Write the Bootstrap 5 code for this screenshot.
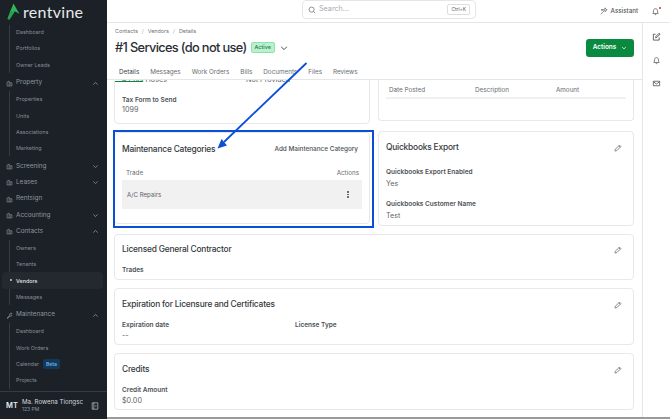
<!DOCTYPE html>
<html>
<head>
<meta charset="UTF-8">
<title>Vendor Details</title>
<link href="https://cdn.jsdelivr.net/npm/bootstrap@5.3.0/dist/css/bootstrap.min.css" rel="stylesheet">
<style>
    html, body { height: 100%; }
    body { font-family: Inter, "Liberation Sans", sans-serif; color: #343a40; background: #fff; position: relative; }
    .side { width: 107px; background: #1b2127; color: #8f969d; flex: none; }
    .brand { height: 25px; padding: 3px 0 0 7px; gap: 3px; }
    .brand-name { font-family: Lato, sans-serif; font-size: 16px; line-height: 18px; color: #e8eaec; letter-spacing: .3px; }
    .side-scroll { min-height: 0; }
    .grp { height: 16.3px; padding: 0 8px 0 6px; margin-top: 2px; font-size: 6.4px; gap: 3px; }
    .grp svg { flex: none; }
    .grp-tight { margin-top: 0; }
    .subs { margin-left: 9px; border-left: 1px solid #343b42; }
    .subs-first { margin-top: -1px; }
    .sub { height: 16.3px; padding-left: 6px; font-size: 5.4px; color: #868d94; gap: 4px; }
    .sub.on { background: #23292f; color: #e3e5e7; margin-left: -8px; margin-right: 4px; padding-left: 14px; border-radius: 4px; position: relative; font-weight: 500; }
    .sub.on::before { content: ""; position: absolute; left: 8px; top: 7px; width: 2px; height: 2px; border-radius: 50%; background: #c9cdd0; }
    .beta { background: #12395a; color: #6db3e8; font-size: 5px; font-weight: 600; padding: 1.5px 3px; border-radius: 2px; line-height: 7px; }
    .side-foot { height: 28px; border-top: 1px solid #343b42; padding: 0 8px 0 6px; flex: none; }
    .avatar { font-size: 7.5px; font-weight: 600; color: #e8eaec; width: 12px; }
    .user-name { font-size: 6.2px; line-height: 8px; color: #d7dadd; white-space: nowrap; overflow: hidden; width: 62px; }
    .user-sub { font-size: 5px; line-height: 7px; color: #8f969d; }
    .main-wrap { min-width: 0; border-bottom: 2px solid #9a9a9a; }
    .topbar { height: 23px; border-bottom: 1px solid #e6e6e6; flex: none; padding: 0 10px 0 195px; }
    .search-box { width: 174px; height: 18.5px; margin-top: -3px; border: 1px solid #e6e6e6; border-radius: 4px; padding: 0 5px; gap: 3px; color: #a6aaae; font-size: 7.2px; }
    .kbd-box { border: 1px solid #dedede; border-radius: 2px; font-size: 4.8px; color: #555; padding: 1px 3px; line-height: 7px; margin-left: auto; }
    .assist { font-size: 6.2px; color: #555; gap: 3px; margin-right: 13px; font-weight: 500; }
    .bell-top { position: relative; }
    .bell-top::after { content: ""; position: absolute; right: -1px; top: 0; width: 2.5px; height: 2.5px; border-radius: 50%; background: #b4432c; }
    .rail { width: 28px; border-left: 1px solid #e6e6e6; flex: none; padding-top: 9px; gap: 14.5px; }
    .page-head { height: 57px; border-bottom: 1px solid #e6e6e6; padding: 0 8px; flex: none; position: relative; background: #fff; z-index: 1; }
    .crumbs { font-size: 5.4px; color: #6c7278; gap: 4px; line-height: 7px; padding-top: 4.5px; }
    .crumbs i { font-style: normal; color: #a6aaae; }
    .title-row { margin-top: 4px; }
    .page-title { font-size: 12.8px; font-weight: 500; line-height: 18px; margin: 0; color: #2b2f33; letter-spacing: -.65px; white-space: nowrap; }
    .status-pill { background: #b9f0cd; border: 1px solid #8ee0ae; color: #167a47; font-size: 5.4px; font-weight: 500; line-height: 7px; padding: 1px 3px; border-radius: 2px; margin-left: -4px; }
    .title-chev { margin-left: -3px; }
    .btn-act { width: 48px; height: 18px; background: #0a8a40; border: 0; color: #fff; font-size: 6.4px; font-weight: 600; border-radius: 3px; padding: 0; gap: 5px; }
    .tab-row { margin-top: 7px; }
    .tab-item { font-size: 6.3px; color: #666c72; padding: 0 4px; line-height: 17px; height: 18px; margin-right: 3px; white-space: nowrap; }
    .tab-item.on { color: #3d4348; border-bottom: 1px solid #0a8a40; }
    .body-area { min-height: 0; overflow: hidden; padding: 0 8px 0 7px; }
    .box { border: 1px solid #e8e8e8; border-radius: 4px; background: #fff; }
    .col-pair { gap: 8px; margin-bottom: 1px; }
    .col-half { width: 256px; flex: none; }
    .box-top-l { height: 64px; margin-top: -20px; padding: 14px 7px 0; }
    .clip-row { height: 20.5px; }
    .clip-first { width: 124px; }
    .box-top-r { height: 41px; border-top: 0; border-top-left-radius: 0; border-top-right-radius: 0; padding: 0 7px; }
    .posted-head { padding: 6px 3px 3px; border-bottom: 2px solid #f0f0f0; }
    .posted-date { width: 86px; }
    .posted-desc { width: 81px; }
    .box-maint { height: 92px; margin-top: 8px; padding: 11px 7px 0; }
    .box-qb { height: 95px; margin-top: 10px; padding: 10px 7px 0; }
    .box-wide { padding: 10px 7px 0; margin-top: 8px; }
    .box-lic { height: 46px; padding-top: 9px; }
    .box-exp { height: 57px; }
    .box-title { font-size: 8.4px; line-height: 11px; font-weight: 500; color: #33383d; margin: 0; letter-spacing: -.2px; }
    .lbl { font-size: 6.5px; font-weight: 600; line-height: 9px; color: #4c5157; }
    .val { font-size: 7.2px; line-height: 9px; color: #5f656b; }
    .lbl + .val { margin-top: 2px; }
    .lbl + .val.val-tight { margin-top: .5px; }
    .gap-qb1 { margin-top: 15px; }
    .gap-qb2 { margin-top: 11.5px; }
    .gap-lbl { margin-top: 11px; }
    .gap-lic { margin-top: 10.5px; }
    .add-link { font-size: 6.4px; font-weight: 500; color: #4a4f55; }
    .tbl-head { font-size: 6.3px; color: #666c72; line-height: 8px; }
    .maint-head { margin: 14px 0 3px; padding: 0 3px 0 4px; }
    .gray-row { height: 29px; background: #f1f1f1; font-size: 6.1px; color: #5b6167; padding: 0 13px 0 5px; }
    .kebab { gap: 1px; }
    .kebab span { width: 1.6px; height: 1.6px; background: #555; border-radius: 50%; display: block; }
    .lic-col { width: 173px; }
    .overlay-rect { position: absolute; left: 113px; top: 130px; width: 261px; height: 98px; border: 2px solid #0a4fd6; z-index: 5; }
    .overlay-arrow { position: absolute; left: 0; top: 0; z-index: 6; pointer-events: none; }
</style>
</head>
<body class="d-flex overflow-hidden">

<svg width="0" height="0" class="position-absolute">
    <symbol id="pencil" viewBox="0 0 10 10">
        <path d="M1.2 8.8l.5-2.3L6.8 1.4l1.8 1.800-5.1 5.1z M6 2.2l1.800 1.800" fill="none" stroke="#6f6f6f" stroke-width="1"/>
    </symbol>
    <symbol id="chev-up" viewBox="0 0 8 8"><path d="M1.5 5.2L4 2.8l2.5 2.4" fill="none" stroke="#8f969d" stroke-width=".9"/></symbol>
    <symbol id="chev-down" viewBox="0 0 8 8"><path d="M1.5 2.8L4 5.2l2.5-2.4" fill="none" stroke="#8f969d" stroke-width=".9"/></symbol>
    <symbol id="bell" viewBox="0 0 10 10"><path d="M2 7.2c.7-.8.8-1.600.8-3 0-1.400 1-2.400 2.200-2.400s2.200 1 2.200 2.400c0 1.400.1 2.200.8 3z M4.200 8.500h1.600" fill="none" stroke="#666" stroke-width=".9"/></symbol>
    <symbol id="block" viewBox="0 0 10 10"><path d="M1.5 8.500V3l3-1.500v7 M4.500 4h4v4.500h-7 M6 5.500h1.200 M6 7h1.200" fill="none" stroke="#8f969d" stroke-width=".9"/></symbol>
</svg>

<aside class="side d-flex flex-column">
    <div class="brand d-flex align-items-start">
        <svg width="13" height="17" viewBox="0 0 13 17"><path d="M6.500 0.500L12.500 11 7.800 8.200 2.500 16.500 0.500 16 3.400 8z" fill="#2fb457"/><path d="M3.400 8L7.800 8.200 2.500 16.500 0.500 16z" fill="#25a34c"/></svg>
        <span class="brand-name">rentvine</span>
    </div>
    <div class="side-scroll flex-grow-1 overflow-hidden">
        <div class="subs subs-first">
            <div class="sub d-flex align-items-center">Dashboard</div>
            <div class="sub d-flex align-items-center">Portfolios</div>
            <div class="sub d-flex align-items-center">Owner Leads</div>
        </div>
        <div class="grp d-flex align-items-center"><svg width="7" height="7"><use href="#block"/></svg><span>Property</span><svg class="ms-auto" width="7" height="7"><use href="#chev-up"/></svg></div>
        <div class="subs">
            <div class="sub d-flex align-items-center">Properties</div>
            <div class="sub d-flex align-items-center">Units</div>
            <div class="sub d-flex align-items-center">Associations</div>
            <div class="sub d-flex align-items-center">Marketing</div>
        </div>
        <div class="grp d-flex align-items-center"><svg width="7" height="7"><use href="#block"/></svg><span>Screening</span><svg class="ms-auto" width="7" height="7"><use href="#chev-down"/></svg></div>
        <div class="grp grp-tight d-flex align-items-center"><svg width="7" height="7"><use href="#block"/></svg><span>Leases</span><svg class="ms-auto" width="7" height="7"><use href="#chev-down"/></svg></div>
        <div class="grp grp-tight d-flex align-items-center"><svg width="7" height="7"><use href="#block"/></svg><span>Rentsign</span></div>
        <div class="grp grp-tight d-flex align-items-center"><svg width="7" height="7"><use href="#block"/></svg><span>Accounting</span><svg class="ms-auto" width="7" height="7"><use href="#chev-down"/></svg></div>
        <div class="grp grp-tight d-flex align-items-center"><svg width="7" height="7"><use href="#block"/></svg><span>Contacts</span><svg class="ms-auto" width="7" height="7"><use href="#chev-up"/></svg></div>
        <div class="subs">
            <div class="sub d-flex align-items-center">Owners</div>
            <div class="sub d-flex align-items-center">Tenants</div>
            <div class="sub on d-flex align-items-center">Vendors</div>
            <div class="sub d-flex align-items-center">Messages</div>
        </div>
        <div class="grp d-flex align-items-center"><svg width="7" height="7" viewBox="0 0 10 10"><path d="M1.500 8.500L5 5a2.500 2.500 0 0 1 3.500-3L7 3.500 8.500 5A2.500 2.500 0 0 1 5.500 5.800L2.500 9.200z" fill="none" stroke="#8f969d"/></svg><span>Maintenance</span><svg class="ms-auto" width="7" height="7"><use href="#chev-up"/></svg></div>
        <div class="subs">
            <div class="sub d-flex align-items-center">Dashboard</div>
            <div class="sub d-flex align-items-center">Work Orders</div>
            <div class="sub d-flex align-items-center">Calendar <span class="beta">Beta</span></div>
            <div class="sub d-flex align-items-center">Projects</div>
        </div>
    </div>
    <div class="side-foot d-flex align-items-center gap-1">
        <span class="avatar">MT</span>
        <div>
            <div class="user-name">Ma. Rowena Tiongsc</div>
            <div class="user-sub">123 PM</div>
        </div>
        <svg class="ms-auto" width="8" height="8" viewBox="0 0 10 10"><path d="M1.500 1h7v8h-7z M3.500 1v8 M5 5h2" fill="none" stroke="#aab0b5"/></svg>
    </div>
</aside>

<div class="main-wrap flex-grow-1 d-flex flex-column">
    <header class="topbar d-flex align-items-center">
        <div class="search-box d-flex align-items-center">
            <svg width="8" height="8" viewBox="0 0 10 10"><circle cx="4.500" cy="4.500" r="3.200" fill="none" stroke="#666" stroke-width=".9"/><path d="M7 7l2 2" stroke="#666" stroke-width=".9"/></svg>
            <span>Search...</span>
            <span class="kbd-box">Ctrl+K</span>
        </div>
        <div class="assist d-flex align-items-center ms-auto">
            <svg width="8" height="8" viewBox="0 0 10 10"><path d="M1 9L5 5 M6.500 1l.7 1.800L9 3.500l-1.800.7-.7 1.800-.7-1.800L4 3.500l1.800-.7z M2.500 2.500l.3.7.7.3-.7.3-.3.7-.3-.7-.7-.3.7-.3z" fill="none" stroke="#555" stroke-width=".8"/></svg>
            <span>Assistant</span>
        </div>
        <div class="bell-top d-flex"><svg width="9" height="9"><use href="#bell"/></svg></div>
    </header>

    <div class="flex-grow-1 d-flex" style="min-height:0">
        <div class="flex-grow-1 d-flex flex-column" style="min-width:0">
            <section class="page-head">
                <div class="crumbs d-flex"><span>Contacts</span><i>/</i><span>Vendors</span><i>/</i><span>Details</span></div>
                <div class="title-row d-flex align-items-center gap-2">
                    <h1 class="page-title">#1 Services (do not use)</h1>
                    <span class="status-pill">Active</span>
                    <svg class="title-chev" width="8" height="8" viewBox="0 0 10 10"><path d="M1.500 3.500L5 7l3.500-3.500" fill="none" stroke="#3d4348" stroke-width="1.200"/></svg>
                    <button class="btn btn-act ms-auto d-flex align-items-center justify-content-center" type="button">Actions <svg width="6" height="6" viewBox="0 0 8 8"><path d="M1.500 2.800L4 5.200l2.500-2.400" fill="none" stroke="#fff"/></svg></button>
                </div>
                <nav class="tab-row d-flex">
                    <span class="tab-item on">Details</span>
                    <span class="tab-item">Messages</span>
                    <span class="tab-item">Work Orders</span>
                    <span class="tab-item">Bills</span>
                    <span class="tab-item">Documents</span>
                    <span class="tab-item">Files</span>
                    <span class="tab-item">Reviews</span>
                </nav>
            </section>

            <div class="body-area flex-grow-1">
                <div class="d-flex col-pair">
                    <div class="col-half">
                        <div class="box box-top-l">
                            <div class="clip-row d-flex val"><span class="clip-first"># Pool Hoses</span><span>Not Provided</span></div>
                            <div class="lbl">Tax Form to Send</div>
                            <div class="val val-tight">1099</div>
                        </div>
                        <div class="box box-maint">
                            <div class="d-flex justify-content-between align-items-center">
                                <h2 class="box-title">Maintenance Categories</h2>
                                <span class="add-link me-1">Add Maintenance Category</span>
                            </div>
                            <div class="tbl-head maint-head d-flex justify-content-between"><span>Trade</span><span>Actions</span></div>
                            <div class="gray-row d-flex align-items-center justify-content-between">
                                <span>A/C Repairs</span>
                                <div class="kebab d-flex flex-column"><span></span><span></span><span></span></div>
                            </div>
                        </div>
                    </div>
                    <div class="col-half">
                        <div class="box box-top-r">
                            <div class="tbl-head posted-head d-flex"><span class="posted-date">Date Posted</span><span class="posted-desc">Description</span><span>Amount</span></div>
                        </div>
                        <div class="box box-qb">
                            <div class="d-flex justify-content-between align-items-center">
                                <h2 class="box-title">Quickbooks Export</h2>
                                <svg class="me-1" width="8" height="8"><use href="#pencil"/></svg>
                            </div>
                            <div class="lbl gap-qb1">Quickbooks Export Enabled</div>
                            <div class="val">Yes</div>
                            <div class="lbl gap-qb2">Quickbooks Customer Name</div>
                            <div class="val">Test</div>
                        </div>
                    </div>
                </div>

                <div class="box box-wide box-lic">
                    <div class="d-flex justify-content-between align-items-center">
                        <h2 class="box-title">Licensed General Contractor</h2>
                        <svg class="me-1" width="8" height="8"><use href="#pencil"/></svg>
                    </div>
                    <div class="lbl gap-lic">Trades</div>
                </div>
                <div class="box box-wide box-exp">
                    <div class="d-flex justify-content-between align-items-center">
                        <h2 class="box-title">Expiration for Licensure and Certificates</h2>
                        <svg class="me-1" width="8" height="8"><use href="#pencil"/></svg>
                    </div>
                    <div class="d-flex gap-lbl">
                        <div class="lic-col">
                            <div class="lbl">Expiration date</div>
                            <div class="val val-tight">--</div>
                        </div>
                        <div class="lbl">License Type</div>
                    </div>
                </div>
                <div class="box box-wide box-exp">
                    <div class="d-flex justify-content-between align-items-center">
                        <h2 class="box-title">Credits</h2>
                        <svg class="me-1" width="8" height="8"><use href="#pencil"/></svg>
                    </div>
                    <div class="lbl gap-lbl">Credit Amount</div>
                    <div class="val val-tight">$0.00</div>
                </div>
            </div>
        </div>
        <aside class="rail d-flex flex-column align-items-center">
            <svg width="9" height="9" viewBox="0 0 10 10"><path d="M8 6v3H1.500V2.500H4 M4 6.500l.4-1.600L8 1.300l1 1-3.500 3.700z" fill="none" stroke="#555" stroke-width="1"/></svg>
            <svg width="9" height="9"><use href="#bell"/></svg>
            <svg width="9" height="9" viewBox="0 0 10 10"><path d="M1.500 2.500h7v5h-7z M1.500 3l3.500 2.500L8.500 3" fill="none" stroke="#555" stroke-width=".9"/></svg>
        </aside>
    </div>
</div>

<div class="overlay-rect"></div>
<svg class="overlay-arrow" width="670" height="419" viewBox="0 0 670 419">
    <path d="M306.500 63L224 142" stroke="#0a4fd6" stroke-width="1.800" fill="none"/>
    <path d="M217.500 148.500L227 145.500 221.500 139z" fill="#0a4fd6"/>
</svg>
</body>
</html>
